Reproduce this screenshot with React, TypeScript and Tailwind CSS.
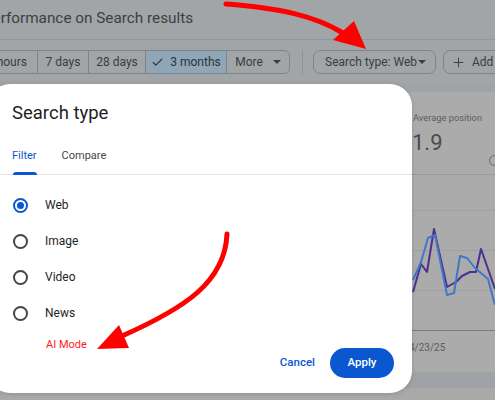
import { Check, Plus } from "lucide-react";

const radios = ["Web", "Image", "Video", "News"];

function Radio({ checked }: { checked: boolean }) {
  return checked ? (
    <span className="w-[15px] h-[15px] rounded-full border-2 border-[#0b57d0] flex items-center justify-center">
      <span className="w-[7px] h-[7px] rounded-full bg-[#0b57d0]" />
    </span>
  ) : (
    <span className="w-[15px] h-[15px] rounded-full border-2 border-[#444746]" />
  );
}

function Caret() {
  return <span className="w-0 h-0 border-l-[4px] border-r-[4px] border-t-[4px] border-l-transparent border-r-transparent border-t-[#3c3f42]" />;
}

export default function App() {
  const purple = "413,292 421,264 427,272 434,229 447,287 456,282 462,276 470,272 476,272 481,249 495,289";
  const blue = "413,280 421,262 428,238 435,235 447,295 454,293 460,256 467,258 475,268 488,279 495,305";

  return (
    <div className="relative w-[495px] h-[400px] overflow-hidden bg-[#a2a5a8] font-['Roboto',sans-serif] text-[#3a3d40]">
      {/* page behind the scrim */}
      <div className="h-[40px] border-b border-[#95989b] flex items-start pt-[9px]">
        <h1 className="ml-[-17px] text-[15.3px] leading-[18px] text-[#3c3f42] whitespace-nowrap">Performance on Search results</h1>
      </div>

      <div className="h-[44px] flex items-center text-[12px] whitespace-nowrap">
        <div className="ml-[-29px] shrink-0 flex h-[24px] border border-[#7f8386] rounded-[6px] overflow-hidden">
          <span className="w-[66px] shrink-0 pr-[10px] flex items-center justify-end border-r border-[#7f8386]">24 hours</span>
          <span className="w-[51px] shrink-0 flex items-center justify-center border-r border-[#7f8386]">7 days</span>
          <span className="w-[57px] shrink-0 flex items-center justify-center border-r border-[#7f8386]">28 days</span>
          <span className="w-[81px] shrink-0 flex items-center justify-center gap-[6px] bg-[#8ea6b8] border-r border-[#7f8386] text-[#2f3336]">
            <Check className="w-[13px] h-[13px]" strokeWidth={2} />3 months
          </span>
          <span className="w-[62px] shrink-0 flex items-center justify-center gap-[10px]">
            More
            <Caret />
          </span>
        </div>
        <span className="ml-[12px] shrink-0 w-px h-[24px] bg-[#909396]" />
        <div className="ml-[10px] shrink-0 h-[24px] w-[123px] border border-[#7f8386] rounded-[7px] flex items-center justify-between pl-[11px] pr-[9px]">
          Search type: Web
          <Caret />
        </div>
        <div className="ml-[7px] shrink-0 h-[24px] w-[90px] border border-[#7f8386] rounded-[7px] flex items-center gap-[6px] pl-[7px]">
          <Plus className="w-[15px] h-[15px]" strokeWidth={1.5} />
          Add filter
        </div>
      </div>

      <div className="h-[8px] bg-[#a0a3a6]" />
      <div className="h-[280px] bg-[#ababab] flex">
        <div className="w-[412px] shrink-0" />
        <div className="flex-1 flex flex-col">
          <div className="h-[83px] border-b border-[#9c9c9c] relative">
            <p className="mt-[19px] ml-[1px] text-[9.3px] leading-[14px] text-[#5b5d60] whitespace-nowrap">Average position</p>
            <p className="mt-[5px] text-[22px] leading-[26px] text-[#4a4c4f]">1.9</p>
            <span className="absolute left-[77px] top-[63px] w-[11px] h-[11px] rounded-full border border-[#6a6d70]" />
          </div>
          <div className="h-[36px] border-b border-[#a0a0a0]" />
          <div className="h-[40px] border-b border-[#a0a0a0]" />
          <div className="h-[40px] border-b border-[#a0a0a0]" />
          <div className="h-[40px] border-b border-[#7e7e7e]" />
          <p className="mt-[9px] ml-[-3px] text-[10px] text-[#5b5d60]">4/23/25</p>
        </div>
      </div>
      <div className="h-[16px] bg-[#9fa3a7]" />
      <div className="h-[12px] bg-[#a9a9a9]" />

      {/* chart lines */}
      <svg className="absolute inset-0 pointer-events-none" width="495" height="400">
        <polyline points={purple} fill="none" stroke="#4e2f8c" strokeWidth="2" strokeLinejoin="round" />
        <polyline points={blue} fill="none" stroke="#3f78c9" strokeWidth="2" strokeLinejoin="round" />
      </svg>

      {/* dialog */}
      <div className="absolute left-[-12px] top-[84px] w-[424px] h-[309px] bg-white rounded-[22px] shadow-[0_1px_4px_rgba(0,0,0,0.15)] flex flex-col">
        <h2 className="shrink-0 mt-[17px] ml-[24px] text-[18.5px] leading-[24px] text-[#1f1f1f]">Search type</h2>
        <div className="shrink-0 mt-[16px] flex border-b border-[#e3e3e3] text-[11px] leading-[16px] h-[34px]">
          <div className="ml-[24px] relative pt-[7px] text-[#0b57d0]">
            Filter
            <span className="absolute left-[1px] right-0 bottom-[-1px] h-[3px] rounded-t-[3px] bg-[#0b57d0]" />
          </div>
          <div className="ml-[25px] pt-[7px] text-[#444746]">Compare</div>
        </div>
        <div className="shrink-0 mt-[12px] flex flex-col">
          {radios.map((r, i) => (
            <label key={r} className="h-[36px] flex items-center pl-[25px] text-[12px] text-[#1f1f1f]">
              <Radio checked={i === 0} />
              <span className="ml-[17px]">{r}</span>
            </label>
          ))}
        </div>
        <div className="shrink-0 mt-[7px] flex items-start justify-between">
          <p className="ml-[58px] text-[11px] leading-[14px] text-[#ff1a1a]">AI Mode</p>
          <div className="mt-[10px] mr-[18px] flex items-center gap-[7px] text-[11.5px] font-medium">
            <button className="px-[8px] h-[30px] text-[#0b57d0]">Cancel</button>
            <button className="w-[64px] h-[30px] rounded-full bg-[#0b57d0] text-white">Apply</button>
          </div>
        </div>
      </div>

      {/* red annotation arrows */}
      <svg className="absolute inset-0 pointer-events-none" width="495" height="400">
        <path d="M226,4 C280,8 315,16 343,33" fill="none" stroke="#ff0000" strokeWidth="5" strokeLinecap="round" />
        <polygon points="333,40 354,21 366,49" fill="#ff0000" />
        <path d="M227,234 C225,282 185,308 122,336" fill="none" stroke="#ff0000" strokeWidth="5" strokeLinecap="round" />
        <polygon points="97,349 119,325 129,348" fill="#ff0000" />
      </svg>
    </div>
  );
}
